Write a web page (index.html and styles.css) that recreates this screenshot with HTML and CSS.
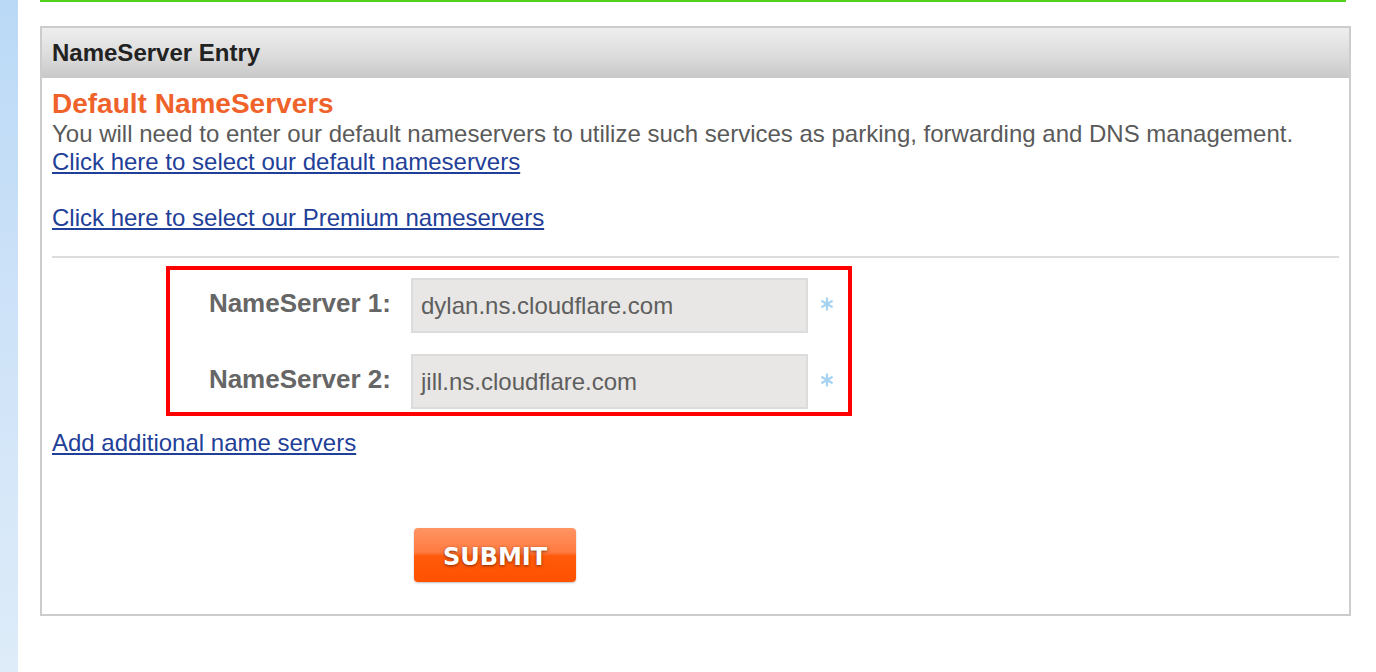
FILE: index.html
```html
<!DOCTYPE html>
<html lang="en">
<head>
<meta charset="utf-8">
<title>NameServer Entry</title>
<link rel="stylesheet" href="styles.css">
</head>
<body>
<div class="page">
  <div class="side-strip"></div>
  <main class="main">
    <div class="green-rule"></div>
    <section class="panel">
      <h2 class="panel-head">NameServer Entry</h2>
      <div class="panel-body">
        <h3 class="title">Default NameServers</h3>
        <p class="intro">You will need to enter our default nameservers to utilize such services as parking, forwarding and DNS management.</p>
        <a class="link" href="#">Click here to select our default nameservers</a>
        <div class="blank"></div>
        <a class="link" href="#">Click here to select our Premium nameservers</a>
        <hr class="divider">
        <div class="ns-box">
          <label class="ns-label" for="ns1">NameServer 1:</label>
          <div class="ns-input" id="ns1">dylan.ns.cloudflare.com</div>
          <svg class="req" viewBox="0 0 14 14" width="14" height="14" aria-hidden="true"><g stroke="#a6d3f2" stroke-width="2.2" stroke-linecap="butt"><line x1="7" y1="0.5" x2="7" y2="13.5"/><line x1="1.4" y1="3.75" x2="12.6" y2="10.25"/><line x1="1.4" y1="10.25" x2="12.6" y2="3.75"/></g></svg>
          <label class="ns-label" for="ns2">NameServer 2:</label>
          <div class="ns-input" id="ns2">jill.ns.cloudflare.com</div>
          <svg class="req" viewBox="0 0 14 14" width="14" height="14" aria-hidden="true"><g stroke="#a6d3f2" stroke-width="2.2" stroke-linecap="butt"><line x1="7" y1="0.5" x2="7" y2="13.5"/><line x1="1.4" y1="3.75" x2="12.6" y2="10.25"/><line x1="1.4" y1="10.25" x2="12.6" y2="3.75"/></g></svg>
        </div>
        <a class="link add-link" href="#">Add additional name servers</a>
        <div class="submit-row">
          <button class="submit" type="button">SUBMIT</button>
        </div>
      </div>
    </section>
  </main>
</div>
</body>
</html>
```

FILE: styles.css
```css
html, body {
  margin: 0;
  padding: 0;
  background: #ffffff;
}

body {
  font-family: "Liberation Sans", Arial, Helvetica, sans-serif;
  width: 1376px;
  height: 672px;
  overflow: hidden;
}

.page {
  display: flex;
  height: 672px;
}

.side-strip {
  width: 18px;
  flex: 0 0 18px;
  background: linear-gradient(to bottom, #bad9f6 0%, #cfe3f8 50%, #deecf9 100%);
}

.main {
  padding-left: 22px;
  display: flex;
  flex-direction: column;
}

.green-rule {
  width: 1306px;
  height: 2px;
  background: #52d11c;
}

.panel {
  margin-top: 24px;
  width: 1311px;
  box-sizing: border-box;
  border: 2px solid #cccccc;
  background: #ffffff;
}

.panel-head {
  margin: 0;
  height: 50px;
  line-height: 50px;
  padding-left: 10px;
  font-size: 24px;
  font-weight: bold;
  color: #222222;
  background: linear-gradient(to bottom, #eeeeee 0%, #dcdcdc 55%, #c8c8c8 100%);
}

.panel-body {
  padding: 11px 10px 32px 10px;
  display: flex;
  flex-direction: column;
  align-items: flex-start;
}

.title {
  margin: 0;
  font-size: 28px;
  line-height: 30px;
  font-weight: bold;
  color: #ef622a;
}

.intro {
  margin: 1px 0 0 0;
  font-size: 24px;
  line-height: 28px;
  color: #5a5a5a;
}

.link {
  font-size: 24px;
  line-height: 28px;
  color: #1f3f99;
  text-decoration: underline;
}

.blank {
  height: 28px;
}

.divider {
  align-self: stretch;
  margin: 24px 0 0 0;
  border: 0;
  height: 2px;
  background: #dddddd;
}

.ns-box {
  margin: 8px 0 0 114px;
  width: 686px;
  height: 150px;
  box-sizing: border-box;
  border: 4px solid #ff0000;
  padding: 8px 0 3px 0;
  display: grid;
  grid-template-columns: 221px 417px 30px;
  row-gap: 21px;
  align-items: start;
}

.ns-label {
  grid-column: 1;
  font-size: 26px;
  font-weight: bold;
  line-height: 51px;
  color: #666666;
  text-align: right;
  white-space: nowrap;
}

.ns-input {
  grid-column: 2;
  margin-left: 20px;
  width: 397px;
  height: 55px;
  box-sizing: border-box;
  border: 2px solid #dcdcdc;
  background: #e8e7e5;
  padding-left: 8px;
  font-size: 24px;
  line-height: 52px;
  color: #5e5e5e;
}

.req {
  grid-column: 3;
  margin: 19px 0 0 12px;
  display: block;
}

.add-link {
  margin-top: 13px;
}

.submit-row {
  margin-top: 71px;
  padding-left: 362px;
}

.submit {
  display: block;
  width: 162px;
  height: 54px;
  border: 0;
  border-radius: 4px;
  padding: 3px 0 0 0;
  background: linear-gradient(to bottom, #ff9563 0%, #ff7a40 45%, #ff5a0a 52%, #ff5200 100%);
  box-shadow: 0 1px 2px rgba(0, 0, 0, 0.25);
  font-family: "DejaVu Sans", Verdana, sans-serif;
  font-weight: bold;
  font-size: 24px;
  color: #ffffff;
  text-shadow: 0 1px 3px rgba(90, 30, 0, 0.75);
  cursor: pointer;
}
```
